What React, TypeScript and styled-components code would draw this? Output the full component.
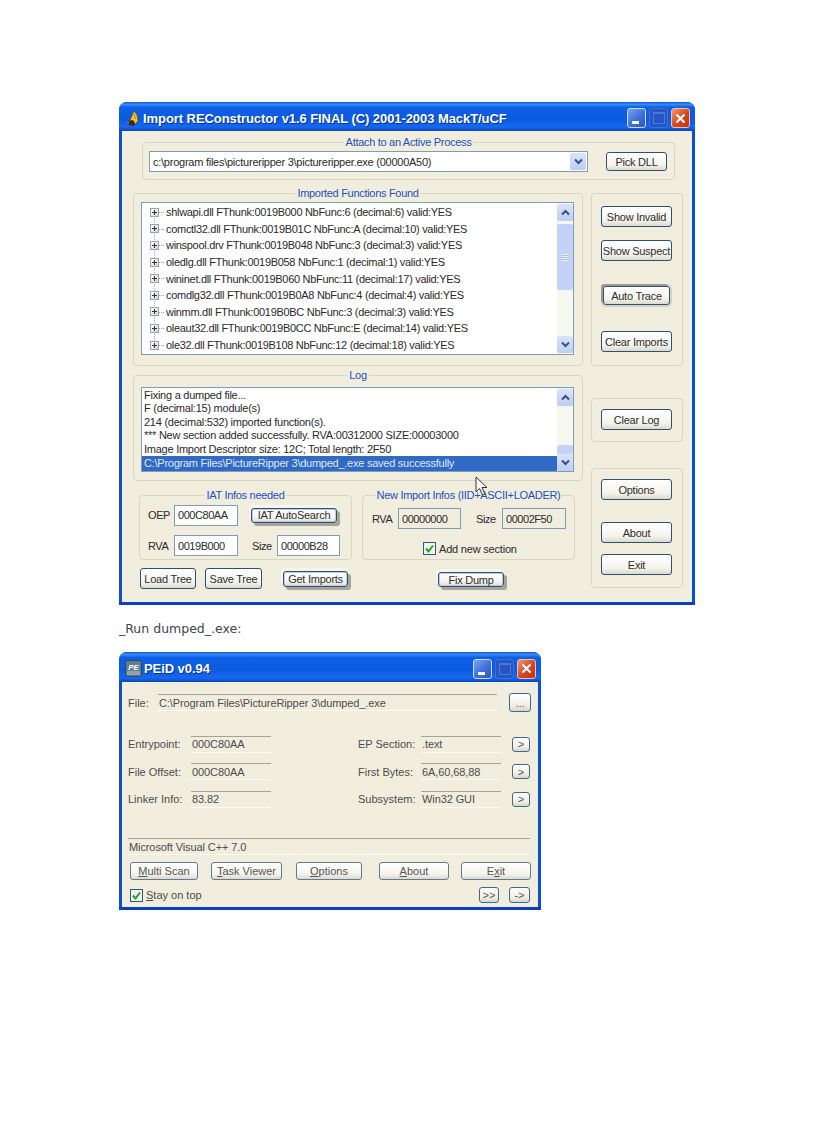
import { createGlobalStyle, css, styled } from 'styled-components';

const dither = css`
  background-color: #efecdd;
  background-image: conic-gradient(#f5f2e4 25%, #ece9d9 0 50%, #f5f2e4 0 75%, #ece9d9 0);
  background-size: 2px 2px;
`;

const GlobalStyle = createGlobalStyle`
  html, body { margin: 0; background: #fff; }
  body { font-family: "Liberation Sans", Arial, sans-serif; font-size: 11px; color: #2a2a2a; }
`;

const Page = styled.div`
  padding: 102px 0 0 119px;
  height: 1021px;
  overflow: hidden;
`;

const Window = styled.div<{ $w: number }>`
  position: relative;
  width: ${({ $w }) => $w}px;
  background: #0a4fd6;
  border-radius: 8px 8px 0 0;
`;

const TitleBar = styled.div<{ $h: number }>`
  box-sizing: border-box;
  height: ${({ $h }) => $h}px;
  display: flex;
  align-items: center;
  padding: 3px 5px 0 6px;
  border-radius: 8px 8px 0 0;
  background: linear-gradient(#0a57dc 0, #3b8cf5 8%, #0d5fe6 18%, #0b5be0 60%, #1668ee 86%, #0a47c4 100%);
`;

const TitleText = styled.div`
  margin-left: 2px;
  flex: 1;
  color: #fff;
  font: bold 13px "Liberation Sans", Arial, sans-serif;
  letter-spacing: -0.07px;
  text-shadow: 1px 1px 0 #0a2f96;
  white-space: nowrap;
`;

const CaptionButton = styled.div<{ $kind: 'min' | 'max' | 'close' }>`
  position: relative;
  width: 19px;
  height: 20px;
  margin-left: 3px;
  box-sizing: border-box;
  border-radius: 3px;
  display: flex;
  align-items: center;
  justify-content: center;
  ${({ $kind }) =>
    $kind === 'close'
      ? css`
          border: 1px solid #f0c0a8;
          background: linear-gradient(135deg, #ef9a70, #d8431d 55%, #c23412);
        `
      : $kind === 'min'
        ? css`
            border: 1px solid #cfdcf8;
            background: linear-gradient(135deg, #7aa2f0, #3f6fdc 55%, #2c57c8);
          `
        : css`
            border: 1px solid #3f70d6;
            background: #2556c4;
          `}
`;

const MinBar = styled.div`
  position: absolute;
  left: 4px;
  bottom: 3px;
  width: 7px;
  height: 3px;
  background: #fff;
`;

const MaxBox = styled.div`
  width: 10px;
  height: 9px;
  border: 1px solid #4a7ad8;
  border-top-width: 2px;
`;

const Client = styled.div<{ $h: number }>`
  ${dither}
  margin: 0 3px;
  height: ${({ $h }) => $h}px;
  overflow: hidden;
`;

const WindowFoot = styled.div`
  height: 3px;
  background: #0a3fc4;
`;

const Row = styled.div<{ $mt?: number; $ml?: number; $gap?: number }>`
  display: flex;
  align-items: flex-start;
  margin-top: ${({ $mt }) => $mt ?? 0}px;
  margin-left: ${({ $ml }) => $ml ?? 0}px;
  gap: ${({ $gap }) => $gap ?? 0}px;
`;

const Column = styled.div<{ $pt?: number; $gap?: number }>`
  display: flex;
  flex-direction: column;
  padding-top: ${({ $pt }) => $pt ?? 0}px;
  gap: ${({ $gap }) => $gap ?? 0}px;
`;

const Group = styled.div<{ $w: number; $h: number }>`
  position: relative;
  box-sizing: border-box;
  width: ${({ $w }) => $w}px;
  height: ${({ $h }) => $h}px;
  flex: none;
  border: 1px solid #d8d5c4;
  border-radius: 4px;
`;

const Legend = styled.div`
  ${dither}
  position: absolute;
  top: -8px;
  left: 50%;
  transform: translateX(-50%);
  padding: 0 2px;
  color: #1b50c4;
  font-size: 11px;
  letter-spacing: -0.3px;
  line-height: 14px;
  white-space: nowrap;
`;

const GroupBody = styled.div<{ $pt: number; $pl: number }>`
  padding: ${({ $pt, $pl }) => `${$pt}px 0 0 ${$pl}px`};
`;

const GroupStack = styled(GroupBody)`
  display: flex;
  flex-direction: column;
  align-items: flex-start;
`;

const Button = styled.div<{
  $w: number;
  $h?: number;
  $mt?: number;
  $ml?: number;
  $look?: 'raised' | 'sunken';
  $small?: boolean;
}>`
  box-sizing: border-box;
  flex: none;
  width: ${({ $w }) => $w}px;
  height: ${({ $h }) => $h ?? 21}px;
  margin-top: ${({ $mt }) => $mt ?? 0}px;
  margin-left: ${({ $ml }) => $ml ?? 0}px;
  display: flex;
  align-items: center;
  justify-content: center;
  border: 1px solid #2b5177;
  border-radius: 3px;
  background: linear-gradient(#ffffff, #f4f3ec 70%, #dcd9cb);
  color: #2e2e2e;
  font-size: 11px;
  letter-spacing: -0.25px;
  white-space: nowrap;
  ${({ $small }) => $small && 'letter-spacing: 0; color: #555; border-color: #5d7a98;'}
  ${({ $look }) =>
    $look === 'raised' &&
    css`
      box-shadow: inset 0 0 0 1px #b9cdea, -2px -3px 0 #f7f5ea, 3px 3px 0 #a7a598;
    `}
  ${({ $look }) =>
    $look === 'sunken' &&
    css`
      box-shadow: -2px -2px 0 #9b9a8c, 0 0 0 2px #d4d2c4;
    `}
`;

const Combo = styled.div`
  box-sizing: border-box;
  width: 439px;
  height: 21px;
  flex: none;
  display: flex;
  align-items: center;
  border: 1px solid #7f9db9;
  background: #fff;
  padding: 0 1px 0 3px;
  font-size: 11px;
  letter-spacing: -0.25px;
`;

const ComboText = styled.div`
  flex: 1;
  white-space: nowrap;
`;

const ArrowButton = styled.div`
  width: 16px;
  height: 17px;
  flex: none;
  display: flex;
  align-items: center;
  justify-content: center;
  border-radius: 2px;
  background: linear-gradient(#d9e4fb, #bccdf6);
`;

const ListBox = styled.div<{ $w: number; $h: number }>`
  box-sizing: border-box;
  width: ${({ $w }) => $w}px;
  height: ${({ $h }) => $h}px;
  display: flex;
  border: 1px solid #7f9db9;
  background: #fff;
`;

const TreeItems = styled.div`
  flex: 1;
  display: grid;
  grid-auto-rows: 16.6px;
  padding: 1px 0 0 8px;
  font-size: 11px;
  letter-spacing: -0.3px;
`;

const TreeRow = styled.div<{ $last?: boolean }>`
  position: relative;
  display: flex;
  align-items: center;
  white-space: nowrap;
  &::after {
    content: '';
    position: absolute;
    left: 4px;
    top: 12px;
    height: 9px;
    border-left: 1px dotted #aab;
    display: ${({ $last }) => ($last ? 'none' : 'block')};
  }
`;

const Expander = styled.div`
  position: relative;
  width: 9px;
  height: 9px;
  box-sizing: border-box;
  flex: none;
  margin-right: 7px;
  border: 1px solid #8fa4bd;
  background: linear-gradient(135deg, #fff, #d5d8c8);
  &::before {
    content: '';
    position: absolute;
    left: 1px;
    top: 3px;
    width: 5px;
    height: 1px;
    background: #333;
  }
  &::after {
    content: '';
    position: absolute;
    left: 3px;
    top: 1px;
    width: 1px;
    height: 5px;
    background: #333;
  }
`;

const Connector = styled.span`
  position: absolute;
  left: 9px;
  top: 8px;
  width: 5px;
  border-top: 1px dotted #99a;
`;

const LogItems = styled.div`
  flex: 1;
  display: grid;
  grid-auto-rows: 13.4px;
  padding-top: 1px;
  font-size: 11px;
  letter-spacing: -0.25px;
  min-width: 0;
`;

const LogRow = styled.div<{ $selected?: boolean }>`
  padding-left: 2px;
  line-height: 13.4px;
  white-space: nowrap;
  ${({ $selected }) => $selected && 'background: #316ac5; color: #dfe8f8; line-height: 15px; height: 15px;'}
`;

const ScrollBar = styled.div`
  width: 16px;
  flex: none;
  display: flex;
  flex-direction: column;
  background: #f7f7f2;
  padding: 1px 0;
`;

const ScrollTrack = styled.div`
  flex: 1;
  padding-top: 2px;
`;

const ScrollThumb = styled.div<{ $top: number; $h: number }>`
  margin-top: ${({ $top }) => $top}px;
  height: ${({ $h }) => $h}px;
  border-radius: 2px;
  background: #c3d2f6;
  display: flex;
  align-items: center;
  justify-content: center;
`;

const Grip = styled.div`
  width: 6px;
  height: 7px;
  background: repeating-linear-gradient(#eef2fd 0 1px, #a9bcea 1px 2px);
`;

const IatGrid = styled.div`
  display: grid;
  grid-template-columns: 26px 64px 14px 25px 63px;
  grid-template-rows: 20px 21px;
  row-gap: 10px;
  align-items: center;
  padding: 9px 0 0 8px;
`;

const FieldLabel = styled.div<{ $w?: number; $ml?: number }>`
  font-size: 11px;
  letter-spacing: -0.4px;
  ${({ $w }) => $w && `width: ${$w}px;`}
  ${({ $ml }) => $ml && `margin-left: ${$ml}px;`}
`;

const Input = styled.div<{ $w?: number; $off?: boolean }>`
  box-sizing: border-box;
  height: 21px;
  width: ${({ $w }) => ($w ? `${$w}px` : 'auto')};
  flex: none;
  display: flex;
  align-items: center;
  padding-left: 3px;
  border: 1px solid #7f9db9;
  font-size: 11px;
  letter-spacing: -0.45px;
  background: #fff;
  ${({ $off }) => $off && dither}
`;

const SearchButton = styled(Button)`
  grid-column: 3 / 6;
`;

const NewInfoRow = styled.div`
  display: flex;
  align-items: center;
  padding: 12px 0 0 9px;
`;

const CheckRow = styled.div<{ $mt: number; $ml: number }>`
  display: flex;
  align-items: center;
  gap: 3px;
  margin: ${({ $mt, $ml }) => `${$mt}px 0 0 ${$ml}px`};
  font-size: 11px;
  letter-spacing: -0.2px;
  white-space: nowrap;
`;

const CheckBox = styled.svg`
  width: 13px;
  height: 13px;
  flex: none;
`;

const Cursor = styled.svg`
  position: absolute;
  left: 356px;
  top: 374px;
  width: 13px;
  height: 20px;
`;

const Caption = styled.div`
  margin-top: 16px;
  height: 16px;
  font: 12.5px/16px "DejaVu Sans", Verdana, sans-serif;
  color: #444;
`;

const SecondWindow = styled(Window)`
  margin-top: 15px;
`;

const PeRow = styled(Row)`
  align-items: center;
`;

const PeLabel = styled.div<{ $w: number }>`
  width: ${({ $w }) => $w}px;
  flex: none;
  white-space: nowrap;
  color: #4c4c4c;
  font-size: 11px;
  letter-spacing: 0;
`;

const StaticField = styled.div<{ $w: number }>`
  box-sizing: border-box;
  width: ${({ $w }) => $w}px;
  height: 17px;
  flex: none;
  display: flex;
  align-items: center;
  padding-left: 1px;
  border-top: 1px solid #a5a397;
  border-bottom: 1px solid #fbfaf3;
  color: #4c4c4c;
  font-size: 11px;
  letter-spacing: -0.1px;
  white-space: nowrap;
`;

const InfoGrid = styled.div`
  display: grid;
  grid-template-columns: 63px 80px 87px 63px 80px 11px 18px;
  grid-auto-rows: 16px;
  row-gap: 11.5px;
  align-items: center;
  margin: 24px 0 0 6px;
`;

const Mini = styled.div<{ $w: number; $h: number; $ml?: number }>`
  box-sizing: border-box;
  width: ${({ $w }) => $w}px;
  height: ${({ $h }) => $h}px;
  margin-left: ${({ $ml }) => $ml ?? 0}px;
  display: flex;
  align-items: center;
  justify-content: center;
  flex: none;
  border: 1px solid #3f6a8f;
  border-radius: 3px;
  background: linear-gradient(#fff, #eeede4 70%, #d9d6c8);
  color: #555;
  font-size: 11px;
`;

const Chevron = ({ up }: { up?: boolean }) => (
  <svg width="9" height="7" viewBox="0 0 9 7" aria-hidden="true">
    <path d={up ? 'M1 5.5 4.5 2 8 5.5' : 'M1 1.5 4.5 5 8 1.5'} fill="none" stroke="#39507e" strokeWidth="2" />
  </svg>
);

const Scroll = ({ top, h, grip }: { top: number; h: number; grip?: boolean }) => (
  <ScrollBar>
    <ArrowButton>
      <Chevron up />
    </ArrowButton>
    <ScrollTrack>
      <ScrollThumb $top={top} $h={h}>
        {grip && <Grip />}
      </ScrollThumb>
    </ScrollTrack>
    <ArrowButton>
      <Chevron />
    </ArrowButton>
  </ScrollBar>
);

const Check = () => (
  <CheckBox viewBox="0 0 13 13" aria-hidden="true">
    <rect x="0.5" y="0.5" width="12" height="12" fill="#f4f3ea" stroke="#2a5a80" />
    <path d="M3 6.5 5.5 9.5 10 3.5" fill="none" stroke="#21a121" strokeWidth="2" />
  </CheckBox>
);

const CloseGlyph = () => (
  <svg width="11" height="11" viewBox="0 0 11 11" aria-hidden="true">
    <path d="M1.5 1.5 9.5 9.5M9.5 1.5 1.5 9.5" stroke="#fff" strokeWidth="2.2" />
  </svg>
);

const WindowControls = () => (
  <>
    <CaptionButton $kind="min">
      <MinBar />
    </CaptionButton>
    <CaptionButton $kind="max">
      <MaxBox />
    </CaptionButton>
    <CaptionButton $kind="close">
      <CloseGlyph />
    </CaptionButton>
  </>
);

const ImportIcon = () => (
  <svg width="16" height="17" viewBox="0 0 16 17" aria-hidden="true">
    <path d="M9 1 12 5 13 11 9 15 4 13 6 8Z" fill="#f5c92e" stroke="#6b4a08" strokeWidth="0.7" />
    <path d="M3 11 8 10 10 13 9 16 4 15Z" fill="#3a2a18" />
    <path d="M9 4 10.5 9" stroke="#a87c10" fill="none" />
    <path d="M1 12.5 4 11.5 4 13.5Z" fill="#d9662a" />
  </svg>
);

const PeidIcon = () => (
  <svg width="17" height="17" viewBox="0 0 17 17" aria-hidden="true">
    <rect x="0.5" y="0.5" width="16" height="16" rx="2" fill="#5f7c92" stroke="#2d4a66" />
    <rect x="2" y="11" width="13" height="4" fill="#8fa3a5" />
    <text x="8.5" y="9.5" textAnchor="middle" fontFamily="Liberation Sans" fontSize="8" fontWeight="bold" fontStyle="italic" fill="#fff">
      PE
    </text>
  </svg>
);

const imports = [
  'shlwapi.dll FThunk:0019B000 NbFunc:6 (decimal:6) valid:YES',
  'comctl32.dll FThunk:0019B01C NbFunc:A (decimal:10) valid:YES',
  'winspool.drv FThunk:0019B048 NbFunc:3 (decimal:3) valid:YES',
  'oledlg.dll FThunk:0019B058 NbFunc:1 (decimal:1) valid:YES',
  'wininet.dll FThunk:0019B060 NbFunc:11 (decimal:17) valid:YES',
  'comdlg32.dll FThunk:0019B0A8 NbFunc:4 (decimal:4) valid:YES',
  'winmm.dll FThunk:0019B0BC NbFunc:3 (decimal:3) valid:YES',
  'oleaut32.dll FThunk:0019B0CC NbFunc:E (decimal:14) valid:YES',
  'ole32.dll FThunk:0019B108 NbFunc:12 (decimal:18) valid:YES',
];

const logLines = [
  'Fixing a dumped file...',
  'F (decimal:15) module(s)',
  '214 (decimal:532) imported function(s).',
  '*** New section added successfully. RVA:00312000 SIZE:00003000',
  'Image Import Descriptor size: 12C; Total length: 2F50',
  'C:\\Program Files\\PictureRipper 3\\dumped_.exe saved successfully',
];

const peInfo = [
  ['Entrypoint:', '000C80AA', 'EP Section:', '.text'],
  ['File Offset:', '000C80AA', 'First Bytes:', '6A,60,68,88'],
  ['Linker Info:', '83.82', 'Subsystem:', 'Win32 GUI'],
];

const ImportRec = () => (
  <Window $w={576}>
    <TitleBar $h={29}>
      <ImportIcon />
      <TitleText>Import REConstructor v1.6 FINAL (C) 2001-2003 MackT/uCF</TitleText>
      <WindowControls />
    </TitleBar>
    <Client $h={471}>
      <Row $mt={11} $ml={20}>
        <Group $w={533} $h={38}>
          <Legend>Attach to an Active Process</Legend>
          <GroupBody $pt={8} $pl={6}>
            <Row>
              <Combo>
                <ComboText>c:\program files\pictureripper 3\pictureripper.exe (00000A50)</ComboText>
                <ArrowButton>
                  <Chevron />
                </ArrowButton>
              </Combo>
              <Button $w={61} $h={19} $ml={18} $mt={1}>
                Pick DLL
              </Button>
            </Row>
          </GroupBody>
        </Group>
      </Row>

      <Row $mt={13} $ml={11} $gap={8}>
        <Group $w={450} $h={173}>
          <Legend>Imported Functions Found</Legend>
          <GroupBody $pt={8} $pl={7}>
            <ListBox $w={433} $h={153}>
              <TreeItems>
                {imports.map((line, i) => (
                  <TreeRow key={line} $last={i === imports.length - 1}>
                    <Expander />
                    <Connector />
                    {line}
                  </TreeRow>
                ))}
              </TreeItems>
              <Scroll top={1} h={66} grip />
            </ListBox>
          </GroupBody>
        </Group>
        <Group $w={92} $h={173}>
          <GroupStack $pt={12} $pl={9}>
            <Button $w={71}>Show Invalid</Button>
            <Button $w={71} $mt={13}>
              Show Suspect
            </Button>
            <Button $w={67} $h={19} $mt={25} $ml={2} $look="sunken">
              Auto Trace
            </Button>
            <Button $w={71} $mt={26}>
              Clear Imports
            </Button>
          </GroupStack>
        </Group>
      </Row>

      <Row $mt={9} $ml={11} $gap={8}>
        <Column>
          <Group $w={450} $h={106}>
            <Legend>Log</Legend>
            <GroupBody $pt={11} $pl={7}>
              <ListBox $w={433} $h={85}>
                <LogItems>
                  {logLines.map((line, i) => (
                    <LogRow key={line} $selected={i === logLines.length - 1}>
                      {line}
                    </LogRow>
                  ))}
                </LogItems>
                <Scroll top={37} h={9} />
              </ListBox>
            </GroupBody>
          </Group>

          <Row $mt={14} $ml={6} $gap={10}>
            <Group $w={213} $h={65}>
              <Legend>IAT Infos needed</Legend>
              <IatGrid>
                <FieldLabel>OEP</FieldLabel>
                <Input>000C80AA</Input>
                <SearchButton $w={86} $h={15} $ml={13} $look="raised">
                  IAT AutoSearch
                </SearchButton>
                <FieldLabel>RVA</FieldLabel>
                <Input>0019B000</Input>
                <span />
                <FieldLabel>Size</FieldLabel>
                <Input>00000B28</Input>
              </IatGrid>
            </Group>
            <Group $w={213} $h={65}>
              <Legend>New Import Infos (IID+ASCII+LOADER)</Legend>
              <NewInfoRow>
                <FieldLabel $w={26}>RVA</FieldLabel>
                <Input $w={63} $off>
                  00000000
                </Input>
                <FieldLabel $w={26} $ml={15}>
                  Size
                </FieldLabel>
                <Input $w={64} $off>
                  00002F50
                </Input>
              </NewInfoRow>
              <CheckRow $mt={13} $ml={60}>
                <Check />
                Add new section
              </CheckRow>
            </Group>
          </Row>

          <Row $mt={8} $ml={7}>
            <Button $w={56}>Load Tree</Button>
            <Button $w={57} $ml={9}>
              Save Tree
            </Button>
            <Button $w={65} $h={16} $ml={21} $mt={3} $look="raised">
              Get Imports
            </Button>
            <Button $w={66} $h={15} $ml={90} $mt={4} $look="raised">
              Fix Dump
            </Button>
          </Row>
        </Column>

        <Column $pt={23} $gap={26}>
          <Group $w={92} $h={44}>
            <GroupBody $pt={10} $pl={9}>
              <Button $w={71}>Clear Log</Button>
            </GroupBody>
          </Group>
          <Group $w={92} $h={120}>
            <GroupStack $pt={10} $pl={9}>
              <Button $w={71}>Options</Button>
              <Button $w={71} $mt={22}>
                About
              </Button>
              <Button $w={71} $mt={11}>
                Exit
              </Button>
            </GroupStack>
          </Group>
        </Column>
      </Row>
    </Client>
    <WindowFoot />
    <Cursor viewBox="0 0 13 20" aria-hidden="true">
      <path d="M1 1V16L4.5 12.5 7.5 19 10 18 7 11.5H12Z" fill="#f4f4f0" stroke="#333" strokeWidth="1" />
    </Cursor>
  </Window>
);

const Peid = () => (
  <SecondWindow $w={422}>
    <TitleBar $h={30}>
      <PeidIcon />
      <TitleText>PEiD v0.94</TitleText>
      <WindowControls />
    </TitleBar>
    <Client $h={225}>
      <PeRow $mt={11} $ml={6}>
        <PeLabel $w={30}>File:</PeLabel>
        <StaticField $w={339}>C:\Program Files\PictureRipper 3\dumped_.exe</StaticField>
        <Mini $w={22} $h={19} $ml={12}>
          ...
        </Mini>
      </PeRow>
      <InfoGrid>
        {peInfo.map(([a, b, c, d]) => [
          <PeLabel key={a} $w={63}>
            {a}
          </PeLabel>,
          <StaticField key={a + b} $w={80}>
            {b}
          </StaticField>,
          <span key={a + 'gap'} />,
          <PeLabel key={c} $w={63}>
            {c}
          </PeLabel>,
          <StaticField key={c + d} $w={80}>
            {d}
          </StaticField>,
          <span key={c + 'gap'} />,
          <Mini key={c + 'go'} $w={18} $h={15}>
            &gt;
          </Mini>,
        ])}
      </InfoGrid>
      <PeRow $mt={31} $ml={6}>
        <StaticField $w={402}>Microsoft Visual C++ 7.0</StaticField>
      </PeRow>
      <Row $mt={7} $ml={8}>
        <Button $w={68} $h={18} $small>
          <span>
            <u>M</u>ulti Scan
          </span>
        </Button>
        <Button $w={71} $h={18} $ml={13} $small>
          <span>
            <u>T</u>ask Viewer
          </span>
        </Button>
        <Button $w={66} $h={18} $ml={14} $small>
          <span>
            <u>O</u>ptions
          </span>
        </Button>
        <Button $w={70} $h={18} $ml={17} $small>
          <span>
            <u>A</u>bout
          </span>
        </Button>
        <Button $w={70} $h={18} $ml={12} $small>
          <span>
            E<u>x</u>it
          </span>
        </Button>
      </Row>
      <PeRow $mt={7} $ml={8}>
        <CheckRow $mt={0} $ml={0}>
          <Check />
          <PeLabel $w={60}>
            <u>S</u>tay on top
          </PeLabel>
        </CheckRow>
        <Mini $w={20} $h={16} $ml={273}>
          &gt;&gt;
        </Mini>
        <Mini $w={21} $h={16} $ml={10}>
          -&gt;
        </Mini>
      </PeRow>
    </Client>
    <WindowFoot />
  </SecondWindow>
);

export default function App() {
  return (
    <Page>
      <GlobalStyle />
      <ImportRec />
      <Caption>_Run dumped_.exe:</Caption>
      <Peid />
    </Page>
  );
}
